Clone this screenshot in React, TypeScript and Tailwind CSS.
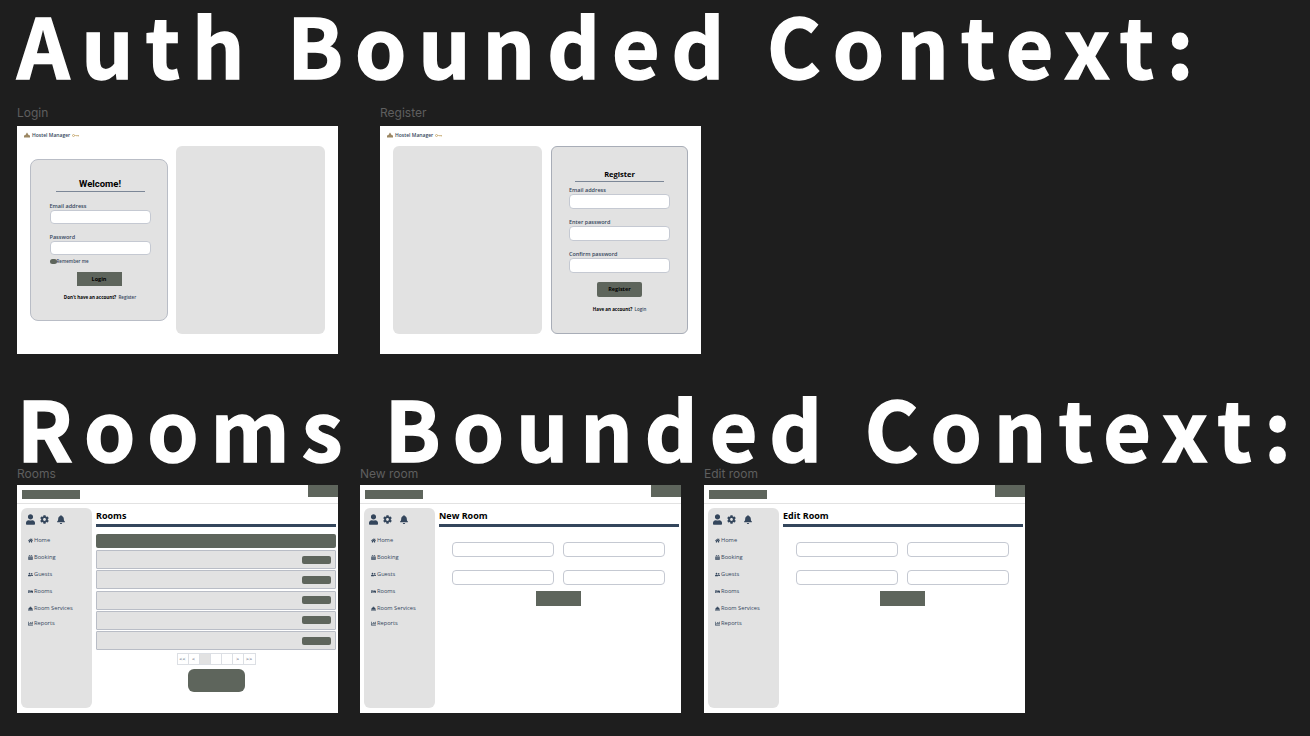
import { FaBed, FaBell, FaCalendarAlt, FaChartBar, FaCog, FaConciergeBell, FaHome, FaUser, FaUserFriends } from "react-icons/fa";
import type { ReactNode } from "react";

const sans = "font-['Open_Sans','Noto_Sans',sans-serif]";

/* ──────── Shared bits ──────── */
function Heading({ children }: { children: ReactNode }) {
  return (
    <h1 className="m-0 whitespace-nowrap font-['Noto_Sans_CJK_JP',sans-serif] text-[82px] font-bold leading-[86px] tracking-[12px] text-white [-webkit-text-stroke:1.5px_white]">
      {children}
    </h1>
  );
}

function Frame({ label, tall, children }: { label: string; tall?: boolean; children: ReactNode }) {
  return (
    <div className="w-[321px] shrink-0">
      <div className={`${tall ? "h-[21px]" : "h-[19px]"} font-['Inter',sans-serif] text-[12px] leading-[15px] text-[#5f5f5f]`}>{label}</div>
      <div className={`h-[228px] w-[321px] overflow-hidden bg-white ${sans}`}>{children}</div>
    </div>
  );
}

function Brand() {
  return (
    <div className="flex h-[20px] items-center pb-[2px] pl-[7px]">
      <svg viewBox="0 0 12 10" className="mr-[2px] h-[6px] w-[6px]">
        <path d="M0 10V6l3-1 1-2 2-3 2 3 1 2 3 1v4z" fill="#9c8763" />
      </svg>
      <span className="text-[5px] font-semibold leading-none text-[#34465c]">Hostel Manager</span>
      <svg viewBox="0 0 14 6" className="ml-[2px] h-[3px] w-[7px]">
        <circle cx="3" cy="3" r="2" fill="none" stroke="#c0a060" strokeWidth="1.5" />
        <path d="M5 3h9M10 3v2M13 3v2" stroke="#c0a060" strokeWidth="1.2" fill="none" />
      </svg>
    </div>
  );
}

function Field({ label, className, box }: { label: string; className: string; box: string }) {
  return (
    <div className={className}>
      <div className="text-[5.5px] font-semibold leading-[7px] text-[#34465c]">{label}</div>
      <div className={`${box} w-[101px] rounded-[4px] border border-[#c5c9d2] bg-white`} />
    </div>
  );
}

function Underline() {
  return <div className="mt-[1px] h-[1px] w-[89px] bg-[#7c8797]" />;
}

/* ──────── Auth frames ──────── */
function Login() {
  return (
    <Frame label="Login" tall>
      <Brand />
      <div className="flex h-[188px] items-center justify-between px-[13px]">
        <div className="flex h-[162px] w-[138px] flex-col items-center rounded-[8px] border border-[#b9bdc6] bg-[#e2e2e2] pl-[2px] pt-[18px]">
          <div className="font-['Roboto',sans-serif] text-[9.5px] font-bold leading-[12px] text-black">Welcome!</div>
          <Underline />
          <Field label="Email address" className="mt-[11px]" box="h-[14px]" />
          <Field label="Password" className="mt-[10px]" box="h-[14px]" />
          <div className="mt-[3px] flex w-[101px] items-center">
            <span className="h-[5px] w-[7px] rounded-full bg-[#5e655c]" />
            <span className="text-[4.5px] font-semibold text-[#34465c]">Remember me</span>
          </div>
          <div className="-ml-[2px] mt-[7px] flex h-[14px] w-[45px] items-center justify-center bg-[#5e655c] text-[5.5px] font-bold text-black">Login</div>
          <div className="mt-[8px] text-[4.5px] font-bold text-black">
            Don't have an account? <span className="ml-[1px] font-semibold text-[#34465c]">Register</span>
          </div>
        </div>
        <div className="h-[188px] w-[149px] rounded-[6px] bg-[#e2e2e2]" />
      </div>
    </Frame>
  );
}

function Register() {
  return (
    <Frame label="Register" tall>
      <Brand />
      <div className="flex h-[188px] items-center justify-between px-[13px]">
        <div className="h-[188px] w-[149px] rounded-[6px] bg-[#e2e2e2]" />
        <div className="flex h-[188px] w-[137px] flex-col items-center rounded-[6px] border border-[#a8adb7] bg-[#e2e2e2] pt-[22px]">
          <div className="text-[7.5px] font-bold leading-[11px] text-black">Register</div>
          <Underline />
          <Field label="Email address" className="mt-[5px]" box="h-[15px]" />
          <Field label="Enter password" className="mt-[10px]" box="h-[15px]" />
          <Field label="Confirm password" className="mt-[10px]" box="h-[15px]" />
          <div className="mt-[9px] flex h-[15px] w-[45px] items-center justify-center rounded-[2px] bg-[#5e655c] text-[5.5px] font-bold text-black">Register</div>
          <div className="mt-[9px] text-[4.5px] font-bold text-black">
            Have an account? <span className="ml-[1px] font-semibold text-[#34465c]">Login</span>
          </div>
        </div>
      </div>
    </Frame>
  );
}

/* ──────── Rooms shell ──────── */
const navItems = [
  { icon: FaHome, label: "Home", h: "h-[17px]" },
  { icon: FaCalendarAlt, label: "Booking", h: "h-[17px]" },
  { icon: FaUserFriends, label: "Guests", h: "h-[17px]" },
  { icon: FaBed, label: "Rooms", h: "h-[17px]" },
  { icon: FaConciergeBell, label: "Room Services", h: "h-[17px]" },
  { icon: FaChartBar, label: "Reports", h: "h-[13px]" },
];

function Sidebar() {
  return (
    <div className="h-[200px] w-[71px] shrink-0 rounded-[6px] bg-[#e2e2e2] pl-[5px] pt-[6px]">
      <div className="flex h-[11px] items-center text-[#34465c]">
        <FaUser className="h-[11px] w-[9px]" />
        <FaCog className="ml-[5px] h-[9px] w-[9px]" />
        <FaBell className="ml-[8px] h-[9px] w-[8px]" />
      </div>
      <div className="mt-[7px]">
        {navItems.map(({ icon: Icon, label, h }) => (
          <div key={label} className={`flex items-center ${h}`}>
            <span className="flex w-[8px] justify-center">
              <Icon className="h-[5px] w-[5px] text-[#34465c]" />
            </span>
            <span className="text-[5.7px] leading-none text-[#34465c]">{label}</span>
          </div>
        ))}
      </div>
    </div>
  );
}

function Shell({ label, title, children }: { label: string; title: string; children: ReactNode }) {
  return (
    <Frame label={label}>
      <div className="flex h-[19px] items-start justify-between border-b border-[#e2e2e2]">
        <div className="ml-[5px] mt-[5px] h-[9px] w-[58px] bg-[#5e655c]" />
        <div className="h-[12px] w-[30px] bg-[#5e655c]" />
      </div>
      <div className="flex pl-[4px] pr-[2px] pt-[4px]">
        <Sidebar />
        <div className="ml-[4px] flex-1">
          <div className="flex h-[16px] items-center pb-[2px] text-[9px] font-bold leading-none text-black">{title}</div>
          <div className="h-[3px] bg-[#34465c]" />
          {children}
        </div>
      </div>
    </Frame>
  );
}

function Rooms() {
  return (
    <Shell label="Rooms" title="Rooms">
      <div className="mt-[7px] h-[14px] rounded-[2px] bg-[#5e655c]" />
      <div className="mt-[2px] flex flex-col gap-[1.25px]">
        {[0, 1, 2, 3, 4].map(i => (
          <div key={i} className="flex h-[19px] items-center justify-end rounded-[1px] border border-[#b9bdc6] bg-[#e2e2e2] pr-[4px]">
            <div className="h-[8px] w-[29px] rounded-[2px] bg-[#5e655c]" />
          </div>
        ))}
      </div>
      <div className="mt-[3px] flex justify-center">
        <div className="flex h-[12px] divide-x divide-[#dcdfe4] border border-[#dcdfe4] text-[5.5px] text-[#34465c]">
          {["<<", "<", "", "", "", ">", ">>"].map((p, i) => (
            <span key={i} className={`flex w-[11px] items-center justify-center ${i === 2 ? "bg-[#e2e2e2]" : "bg-white"}`}>{p}</span>
          ))}
        </div>
      </div>
      <div className="mx-auto mt-[4px] h-[23px] w-[57px] rounded-[6px] bg-[#5e655c]" />
    </Shell>
  );
}

function RoomForm({ label, title }: { label: string; title: string }) {
  return (
    <Shell label={label} title={title}>
      <div className="pr-[2px]">
        <div className="mt-[15px] grid grid-cols-[102px_102px] justify-center gap-x-[9px] gap-y-[13px]">
          {[0, 1, 2, 3].map(i => (
            <div key={i} className="h-[15px] rounded-[4px] border border-[#c5c9d2] bg-white" />
          ))}
        </div>
        <div className="mx-auto mt-[6px] h-[15px] w-[45px] bg-[#5e655c]" />
      </div>
    </Shell>
  );
}

export default function App() {
  return (
    <div className="h-[736px] w-[1310px] overflow-hidden bg-[#1e1e1e] pl-[17px] pt-[1px]">
      <Heading>Auth Bounded Context:</Heading>
      <div className="mt-[18px] flex gap-[42px]">
        <Login />
        <Register />
      </div>
      <div className="mt-[30px]">
        <Heading>Rooms Bounded Context:</Heading>
      </div>
      <div className="-mt-[4px] flex gap-[22px]">
        <Rooms />
        <RoomForm label="New room" title="New Room" />
        <div className="ml-[1px]">
          <RoomForm label="Edit room" title="Edit Room" />
        </div>
      </div>
    </div>
  );
}
